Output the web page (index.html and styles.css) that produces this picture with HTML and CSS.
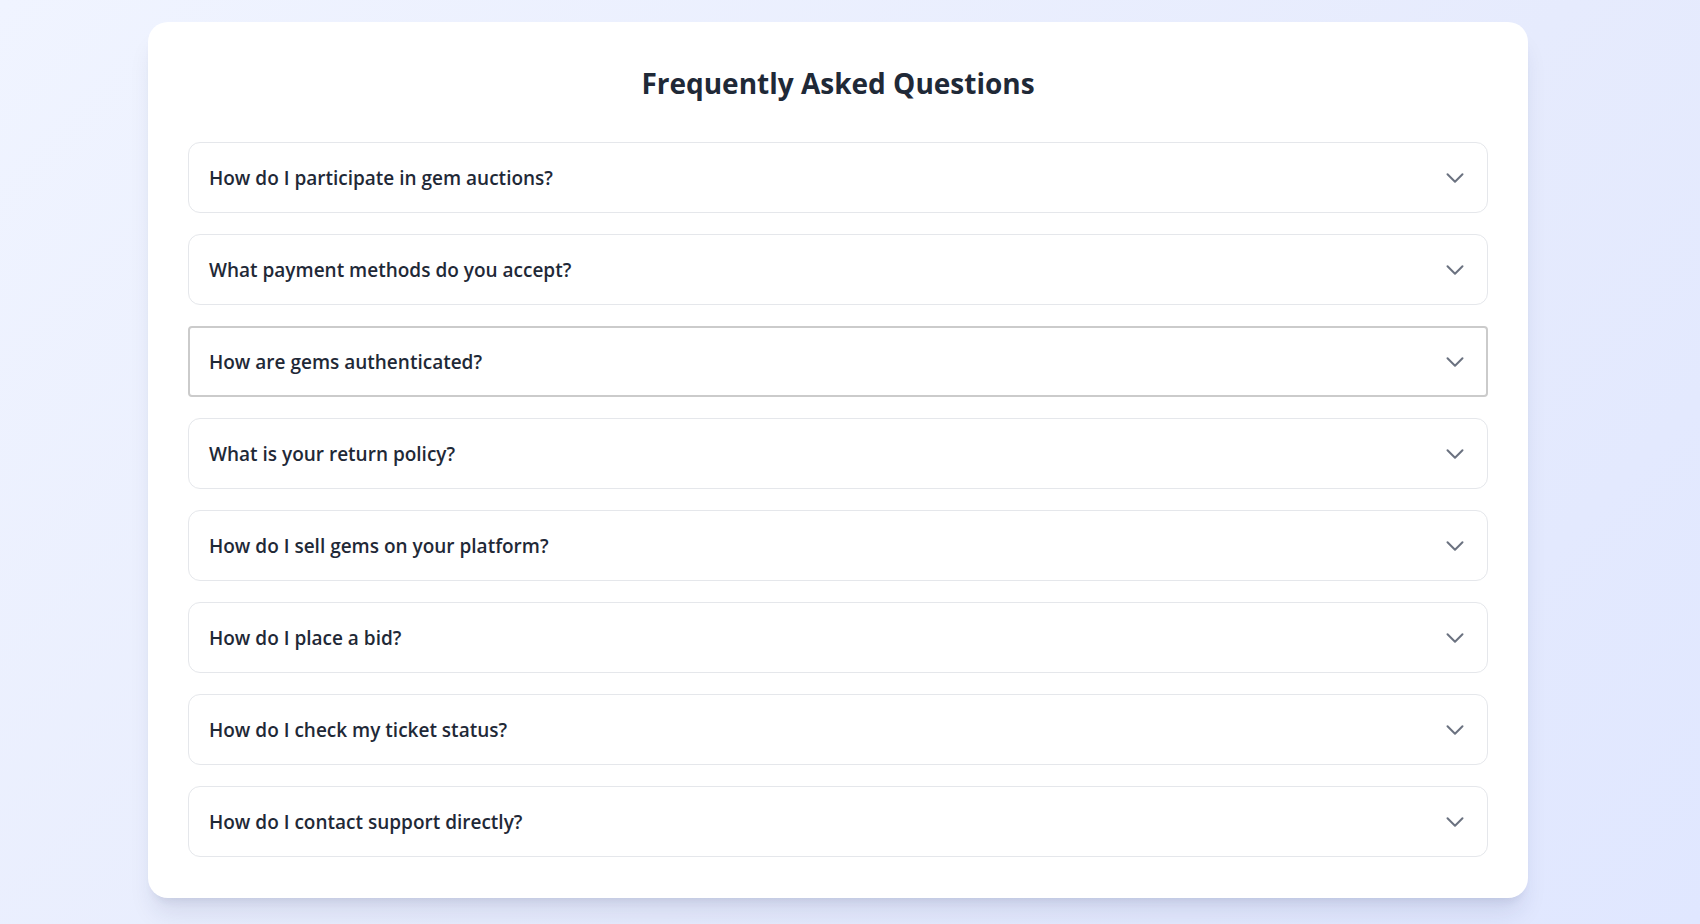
FILE: index.html
```html
<!DOCTYPE html>
<html lang="en">
<head>
<meta charset="utf-8">
<title>FAQ</title>
<link rel="stylesheet" href="styles.css">
</head>
<body>
<main class="page">
  <section class="card">
    <h1 class="title">Frequently Asked Questions</h1>
    <div class="faq-list">
      <button class="faq-item"><span class="q">How do I participate in gem auctions?</span><svg class="chev" viewBox="0 0 24 24" fill="none" stroke="currentColor" stroke-width="2"><path stroke-linecap="round" stroke-linejoin="round" d="m19.5 8.25-7.5 7.5-7.5-7.5"/></svg></button>
      <button class="faq-item"><span class="q">What payment methods do you accept?</span><svg class="chev" viewBox="0 0 24 24" fill="none" stroke="currentColor" stroke-width="2"><path stroke-linecap="round" stroke-linejoin="round" d="m19.5 8.25-7.5 7.5-7.5-7.5"/></svg></button>
      <button class="faq-item focused"><span class="q">How are gems authenticated?</span><svg class="chev" viewBox="0 0 24 24" fill="none" stroke="currentColor" stroke-width="2"><path stroke-linecap="round" stroke-linejoin="round" d="m19.5 8.25-7.5 7.5-7.5-7.5"/></svg></button>
      <button class="faq-item"><span class="q">What is your return policy?</span><svg class="chev" viewBox="0 0 24 24" fill="none" stroke="currentColor" stroke-width="2"><path stroke-linecap="round" stroke-linejoin="round" d="m19.5 8.25-7.5 7.5-7.5-7.5"/></svg></button>
      <button class="faq-item"><span class="q">How do I sell gems on your platform?</span><svg class="chev" viewBox="0 0 24 24" fill="none" stroke="currentColor" stroke-width="2"><path stroke-linecap="round" stroke-linejoin="round" d="m19.5 8.25-7.5 7.5-7.5-7.5"/></svg></button>
      <button class="faq-item"><span class="q">How do I place a bid?</span><svg class="chev" viewBox="0 0 24 24" fill="none" stroke="currentColor" stroke-width="2"><path stroke-linecap="round" stroke-linejoin="round" d="m19.5 8.25-7.5 7.5-7.5-7.5"/></svg></button>
      <button class="faq-item"><span class="q">How do I check my ticket status?</span><svg class="chev" viewBox="0 0 24 24" fill="none" stroke="currentColor" stroke-width="2"><path stroke-linecap="round" stroke-linejoin="round" d="m19.5 8.25-7.5 7.5-7.5-7.5"/></svg></button>
      <button class="faq-item"><span class="q">How do I contact support directly?</span><svg class="chev" viewBox="0 0 24 24" fill="none" stroke="currentColor" stroke-width="2"><path stroke-linecap="round" stroke-linejoin="round" d="m19.5 8.25-7.5 7.5-7.5-7.5"/></svg></button>
    </div>
  </section>
</main>
</body>
</html>
```

FILE: styles.css
```css
* { box-sizing: border-box; }

html, body {
  margin: 0;
  padding: 0;
}

body {
  height: 100vh;
  overflow: hidden;
  background: linear-gradient(135deg, #f0f4ff 0%, #e6ebfd 60%, #e0e7ff 100%);
  font-family: "Open Sans", "Noto Sans", "Liberation Sans", sans-serif;
  color: #1f2937;
}

.page {
  padding: 22px 0 0 148px;
}

.card {
  width: 1380px;
  background: #ffffff;
  border-radius: 20px;
  padding: 43px 40px 41px;
  box-shadow: 0 20px 25px -5px rgba(30, 41, 90, 0.10), 0 8px 10px -6px rgba(30, 41, 90, 0.10);
}

.title {
  margin: 0 0 41px;
  text-align: center;
  font-size: 28px;
  line-height: 36px;
  font-weight: 700;
  color: #1f2937;
}

.faq-list {
  display: flex;
  flex-direction: column;
  gap: 21px;
}

.faq-item {
  display: flex;
  align-items: center;
  justify-content: space-between;
  width: 100%;
  height: 71px;
  padding: 0 20px;
  background: #ffffff;
  border: 1px solid #e5e7eb;
  border-radius: 12px;
  font-family: inherit;
  text-align: left;
  cursor: pointer;
}

.faq-item.focused {
  border: 2px solid #cbcbcb;
  border-radius: 4px;
  padding: 0 19px;
}

.q {
  font-size: 19px;
  line-height: 28px;
  font-weight: 600;
  color: #1f2937;
}

.chev {
  width: 24px;
  height: 24px;
  color: #6b7280;
  flex: none;
}
```
